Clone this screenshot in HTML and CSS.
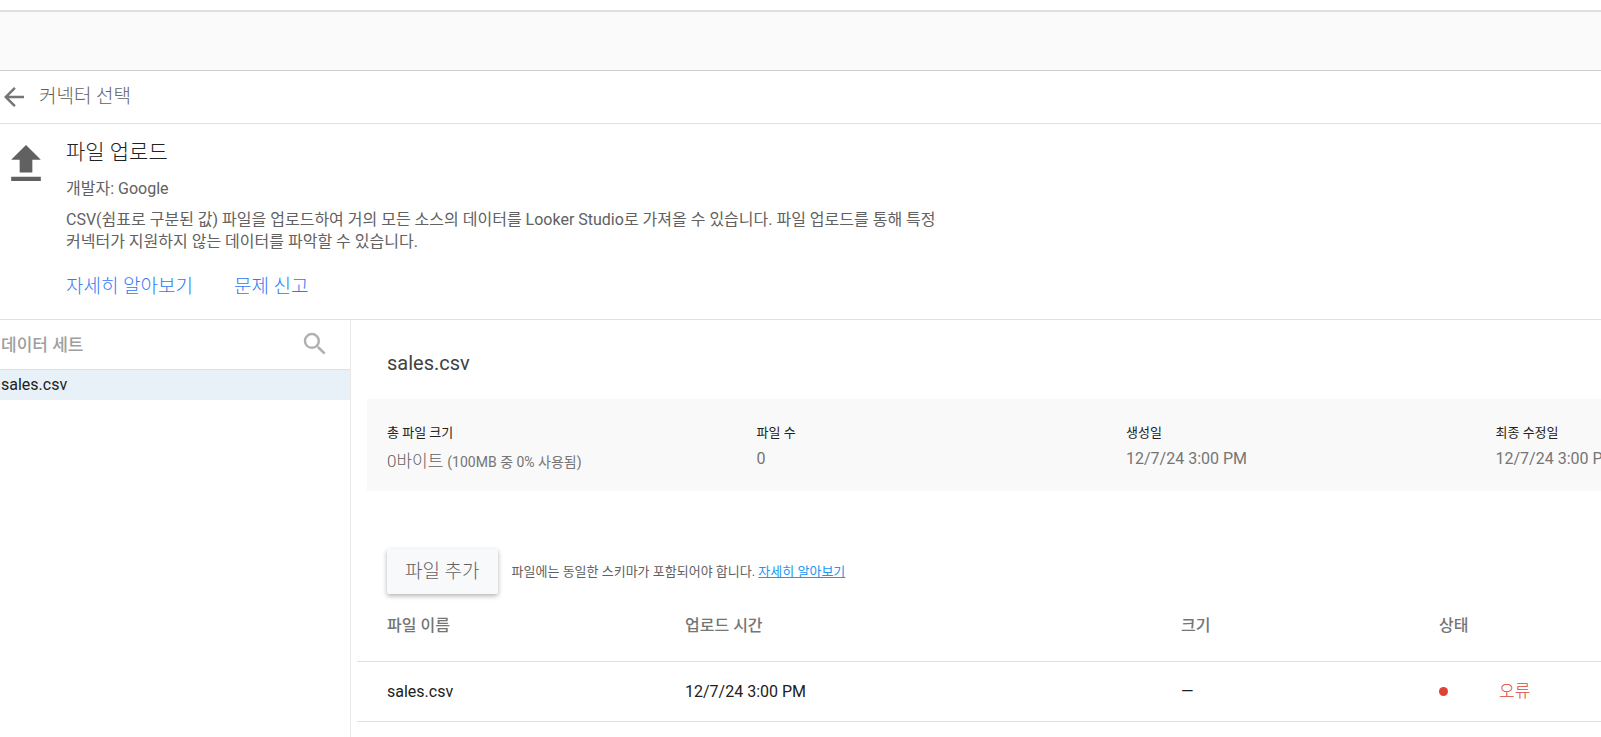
FILE: index.html
```
<!DOCTYPE html>
<html lang="ko">
<head>
  <meta charset="utf-8">
  <title>파일 업로드</title>
  <link rel="stylesheet" href="styles.css">
</head>
<body>
  <div class="toolbar"></div>

  <nav class="back-bar">
    <a href="#" class="back-link">
      <svg class="back-icon" viewBox="4 4 16 16"><path d="M20 11H7.83l5.59-5.59L12 4l-8 8 8 8 1.41-1.41L7.83 13H20v-2z"/></svg>
      <span>커넥터 선택</span>
    </a>
  </nav>

  <header class="connector">
    <svg class="connector-icon" viewBox="5 3 14 17"><path d="M9 16h6v-6h4l-7-7-7 7h4zm-4 2h14v2H5z"/></svg>
    <div class="connector-info">
      <h1>파일 업로드</h1>
      <p class="developer">개발자: Google</p>
      <p class="description">CSV(쉼표로 구분된 값) 파일을 업로드하여 거의 모든 소스의 데이터를 Looker Studio로 가져올 수 있습니다. 파일 업로드를 통해 특정<br>커넥터가 지원하지 않는 데이터를 파악할 수 있습니다.</p>
      <div class="connector-links">
        <a href="#">자세히 알아보기</a>
        <a href="#">문제 신고</a>
      </div>
    </div>
  </header>

  <div class="content">
    <aside class="datasets">
      <div class="datasets-header">
        <h2>데이터 세트</h2>
        <button class="search-button" aria-label="검색">
          <svg viewBox="0 0 24 24"><path d="M15.5 14h-.79l-.28-.27A6.471 6.471 0 0 0 16 9.5 6.5 6.5 0 1 0 9.5 16c1.61 0 3.09-.59 4.23-1.57l.27.28v.79l5 4.99L20.49 19l-4.99-5zm-6 0C7.01 14 5 11.99 5 9.5S7.01 5 9.5 5 14 7.01 14 9.5 11.99 14 9.5 14z"/></svg>
        </button>
      </div>
      <a href="#" class="dataset selected">sales.csv</a>
    </aside>

    <main class="details">
      <h2 class="details-title">sales.csv</h2>

      <dl class="summary">
        <div>
          <dt>총 파일 크기</dt>
          <dd class="usage"><span class="size">0바이트</span> <small>(100MB 중 0% 사용됨)</small></dd>
        </div>
        <div>
          <dt>파일 수</dt>
          <dd>0</dd>
        </div>
        <div>
          <dt>생성일</dt>
          <dd>12/7/24 3:00 PM</dd>
        </div>
        <div>
          <dt>최종 수정일</dt>
          <dd>12/7/24 3:00 PM</dd>
        </div>
      </dl>

      <div class="actions">
        <button class="add-button">파일 추가</button>
        <p>파일에는 동일한 스키마가 포함되어야 합니다. <a href="#">자세히 알아보기</a></p>
      </div>

      <table class="files">
        <thead>
          <tr>
            <th class="col-name">파일 이름</th>
            <th class="col-time">업로드 시간</th>
            <th class="col-size">크기</th>
            <th>상태</th>
          </tr>
        </thead>
        <tbody>
          <tr>
            <td class="col-name">sales.csv</td>
            <td>12/7/24 3:00 PM</td>
            <td>—</td>
            <td><span class="status"><span class="status-dot"></span>오류</span></td>
          </tr>
        </tbody>
      </table>
    </main>
  </div>
</body>
</html>
```
FILE: styles.css
```
* {
  box-sizing: border-box;
}

body {
  margin: 0;
  padding-top: 10px;
  min-height: 100vh;
  display: flex;
  flex-direction: column;
  overflow: hidden;
  font-family: Roboto, "Noto Sans CJK KR", sans-serif;
  font-size: 16px;
  font-weight: 400;
  color: #212121;
  background-color: #fff;
}

h1, h2, p, dl, dd {
  margin: 0;
}

a {
  text-decoration: none;
}

button {
  font-family: inherit;
  border: none;
  cursor: pointer;
}

/* Empty toolbar at the top */
.toolbar {
  height: 61px;
  background-color: #fafafa;
  border-top: 2px solid #e0e0e0;
  border-bottom: 1px solid #ccc;
}

/* Back to connector list */
.back-bar {
  height: 53px;
  display: flex;
  align-items: center;
  padding: 0 4px;
  border-bottom: 1px solid #e0e0e0;
}

.back-link {
  display: flex;
  align-items: center;
  gap: 15px;
  font-size: 19px;
  line-height: 24px;
  font-weight: 300;
  color: #616161;
}

.back-icon {
  width: 20px;
  height: 20px;
  fill: #757575;
}

/* Connector description */
.connector {
  display: flex;
  gap: 25px;
  padding: 14px 11px 18px;
  border-bottom: 1px solid #e0e0e0;
}

.connector-icon {
  width: 30px;
  height: 36px;
  margin-top: 7px;
  fill: #616161;
}

.connector h1 {
  font-size: 21px;
  line-height: 28px;
  font-weight: 300;
  color: #212121;
}

.developer,
.description {
  font-size: 16px;
  line-height: 22px;
  color: #616161;
}

.developer {
  margin-top: 12px;
}

.description {
  margin-top: 9px;
}

.connector-links {
  display: flex;
  gap: 41px;
  margin-top: 20px;
  font-size: 19px;
  line-height: 28px;
  font-weight: 300;
}

.connector-links a {
  color: #2f7af5;
}

.content {
  flex: 1;
  display: flex;
}

/* Data set list */
.datasets {
  flex: 0 0 351px;
  border-right: 1px solid #e8e8e8;
}

.datasets-header {
  height: 50px;
  display: flex;
  align-items: center;
  justify-content: space-between;
  padding: 0 20px 0 1px;
  border-bottom: 1px solid #e0e0e0;
}

.datasets-header h2 {
  font-size: 17px;
  line-height: 24px;
  font-weight: 500;
  color: #9e9e9e;
}

.search-button {
  display: flex;
  padding: 0 0 2px;
  background: none;
}

.search-button svg {
  width: 30px;
  height: 30px;
  fill: #b0b0b0;
}

.dataset {
  display: block;
  padding: 0 1px;
  line-height: 30px;
  color: #212121;
}

.dataset.selected {
  background-color: #e8f1f8;
}

/* Data set details, wider than the window on small screens */
.details {
  flex: 1 0 1520px;
  padding-left: 6px;
}

.details-title {
  margin: 32px 30px 24px;
  font-size: 20px;
  line-height: 23px;
  font-weight: 400;
  color: #424242;
}

.summary {
  display: grid;
  grid-template-columns: repeat(4, 1fr);
  margin-left: 10px;
  padding: 24px 6px 20px 20px;
  height: 92px;
  background-color: #f9f9f9;
}

.summary dt {
  font-size: 13px;
  line-height: 20px;
}

.summary dd {
  margin-top: 4px;
  line-height: 24px;
  color: #757575;
}

.summary .usage {
  line-height: 28px;
}

.summary .size {
  font-size: 17px;
  font-weight: 300;
  color: #616161;
}

.summary small {
  font-size: 14px;
}

/* Add file button and hint */
.actions {
  display: flex;
  align-items: center;
  gap: 14px;
  margin: 58px 30px 0;
}

.add-button {
  padding: 0 18px;
  font-size: 19px;
  line-height: 45px;
  font-weight: 300;
  color: #616161;
  background-color: #f8f9fb;
  border-radius: 2px;
  box-shadow: 0 2px 5px rgba(0, 0, 0, 0.3);
}

.actions p {
  font-size: 13px;
  line-height: 20px;
  color: #616161;
}

.actions p a {
  color: #2196f3;
  text-decoration: underline;
}

/* Uploaded files */
.files {
  width: 100%;
  table-layout: fixed;
  border-collapse: collapse;
}

.files th,
.files td {
  padding: 0;
  text-align: left;
  border-bottom: 1px solid #e0e0e0;
}

.files th {
  height: 67px;
  padding-bottom: 6px;
  font-weight: 500;
  color: #757575;
}

.files td {
  height: 60px;
}

.files .col-name {
  width: 328px;
  padding-left: 30px;
}

.files .col-time {
  width: 496px;
}

.files .col-size {
  width: 258px;
}

.status {
  display: flex;
  align-items: center;
  gap: 51px;
  font-size: 17px;
  line-height: 24px;
  font-weight: 300;
  color: #db4437;
}

.status-dot {
  width: 9px;
  height: 9px;
  border-radius: 50%;
  background-color: #db4437;
}
```
